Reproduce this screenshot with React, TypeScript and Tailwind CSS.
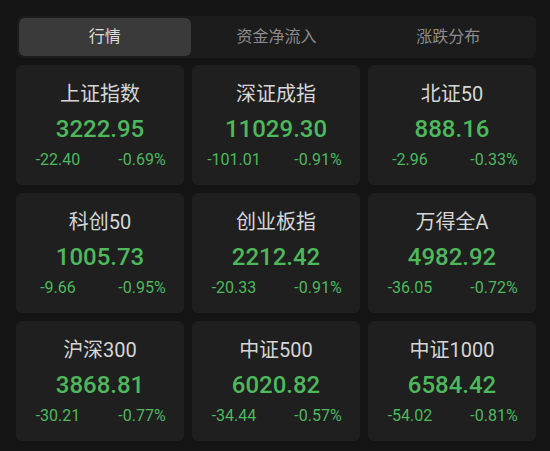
import React, { useState } from 'react';

const tabs = ['行情', '资金净流入', '涨跌分布'];

const indices = [
  { name: '上证指数', price: '3222.95', change: '-22.40', pct: '-0.69%' },
  { name: '深证成指', price: '11029.30', change: '-101.01', pct: '-0.91%' },
  { name: '北证50', price: '888.16', change: '-2.96', pct: '-0.33%' },
  { name: '科创50', price: '1005.73', change: '-9.66', pct: '-0.95%' },
  { name: '创业板指', price: '2212.42', change: '-20.33', pct: '-0.91%' },
  { name: '万得全A', price: '4982.92', change: '-36.05', pct: '-0.72%' },
  { name: '沪深300', price: '3868.81', change: '-30.21', pct: '-0.77%' },
  { name: '中证500', price: '6020.82', change: '-34.44', pct: '-0.57%' },
  { name: '中证1000', price: '6584.42', change: '-54.02', pct: '-0.81%' },
];

export default function App() {
  const [active, setActive] = useState(0);

  return (
    <div
      className="w-[550px] h-[451px] bg-[#141414] pt-4 pl-4 pr-[14px] overflow-hidden"
      style={{ fontFamily: 'Roboto, "Noto Sans CJK SC", sans-serif' }}
    >
      <div className="flex p-[2px] ml-[1px] rounded-md bg-[#1c1c1c] h-[42px]">
        {tabs.map((t, i) => (
          <button
            key={t}
            onClick={() => setActive(i)}
            className={
              i === active
                ? 'flex-1 rounded-md bg-[#3a3a3a] text-[#dcdcdc] text-[16px]'
                : 'flex-1 rounded-md text-[#8c8c8c] text-[16px]'
            }
          >
            {t}
          </button>
        ))}
      </div>

      <div className="grid grid-cols-3 gap-2 mt-[7px]">
        {indices.map((it) => (
          <div key={it.name} className="h-[120px] rounded-md bg-[#1f1f1f] flex flex-col items-center pt-[17px]">
            <div className="text-[20px] leading-[24px] text-[#d6d6d6]">{it.name}</div>
            <div className="mt-[9px] text-[24px] leading-[28px] font-medium text-[#4db85c]">{it.price}</div>
            <div className="w-full grid grid-cols-2 mt-[7px] text-[16px] leading-[20px] text-[#4db85c] text-center">
              <span>{it.change}</span>
              <span>{it.pct}</span>
            </div>
          </div>
        ))}
      </div>
    </div>
  );
}
